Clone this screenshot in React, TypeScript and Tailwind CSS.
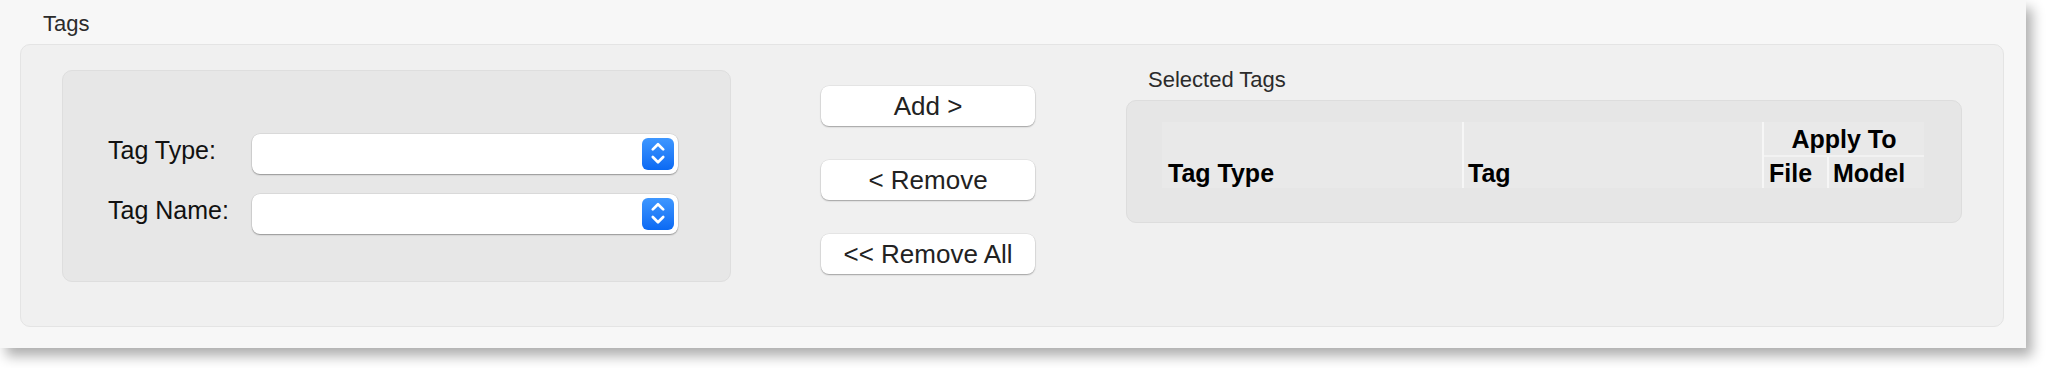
import React from "react";

const font = { fontFamily: '"Liberation Sans", Arial, sans-serif' };

function Stepper() {
  return (
    <div className="w-[32px] h-[32px] rounded-[6px] bg-linear-to-b from-[#3e97ff] to-[#0a69f3] flex items-center justify-center">
      <svg width="32" height="32" viewBox="0 0 32 32" fill="none">
        <path d="M10.8 11.4 L16 6.2 L21.2 11.4" stroke="white" strokeWidth="2.7" strokeLinecap="round" strokeLinejoin="round" />
        <path d="M10.8 19 L16 24.2 L21.2 19" stroke="white" strokeWidth="2.7" strokeLinecap="round" strokeLinejoin="round" />
      </svg>
    </div>
  );
}

function Select() {
  return (
    <div className="w-[426px] h-[40px] bg-white rounded-[8px] shadow-[0_1px_1.5px_rgba(0,0,0,0.32),0_0_0_0.5px_rgba(0,0,0,0.1)] flex items-center justify-end pr-[4px]">
      <Stepper />
    </div>
  );
}

function Btn({ label }: { label: string }) {
  return (
    <div className="w-[214px] h-[40px] bg-white rounded-[8px] shadow-[0_1px_1.5px_rgba(0,0,0,0.3),0_0_0_0.5px_rgba(0,0,0,0.08)] flex items-center justify-center text-[26px] leading-[40px] text-[#222]">
      {label}
    </div>
  );
}

export default function App() {
  return (
    <div className="w-[2046px] h-[368px] bg-white" style={font}>
      <div className="w-[2026px] h-[348px] bg-[#f7f7f7] shadow-[6px_8px_12px_rgba(0,0,0,0.32)] px-[20px] pt-[11px]">
        <div className="pl-[23px] h-[26px] leading-[26px] text-[22px] text-[#2b2b2b] mb-[7px]">Tags</div>
        <div className="w-[1984px] h-[283px] rounded-[10px] border border-[#e4e4e4] bg-[#f0f0f0] flex items-start">
          {/* Left box */}
          <div className="ml-[41px] mt-[25px] w-[669px] h-[212px] rounded-[10px] bg-[#e7e7e7] border border-[#dedede] pt-[63px] pl-[45px] flex flex-col gap-[20px]">
            <div className="flex items-start h-[40px]">
              <div className="w-[144px] h-[32px] leading-[32px] text-[25px] text-[#111]">Tag Type:</div>
              <Select />
            </div>
            <div className="flex items-start h-[40px]">
              <div className="w-[144px] h-[32px] leading-[32px] text-[25px] text-[#111]">Tag Name:</div>
              <Select />
            </div>
          </div>
          {/* Buttons */}
          <div className="ml-[90px] mt-[41px] flex flex-col gap-[34px]">
            <Btn label="Add >" />
            <Btn label="< Remove" />
            <Btn label="<< Remove All" />
          </div>
          {/* Right */}
          <div className="ml-[91px] mt-[22px] flex flex-col">
            <div className="pl-[22px] h-[26px] leading-[26px] text-[22px] text-[#2b2b2b] mb-[7px]">Selected Tags</div>
            <div className="w-[836px] h-[123px] rounded-[10px] bg-[#e6e6e6] border border-[#dddddd] pl-[35px] pt-[21px]">
              <div className="w-[762px] h-[66px] flex font-bold text-[25px] text-black">
                <div className="w-[300px] bg-[#e9e9e9] flex items-end pl-[6px] pb-[1px] leading-[28px]">Tag Type</div>
                <div className="w-[2px] bg-[#f6f6f6]" />
                <div className="w-[298px] bg-[#e9e9e9] flex items-end pl-[4px] pb-[1px] leading-[28px]">Tag</div>
                <div className="w-[2px] bg-[#f6f6f6]" />
                <div className="w-[160px] flex flex-col">
                  <div className="h-[33px] bg-[#e9e9e9] flex items-end justify-center pb-[2px] leading-[28px]">Apply To</div>
                  <div className="h-[2px] bg-[#f2f2f2]" />
                  <div className="flex-1 flex">
                    <div className="w-[63px] bg-[#e9e9e9] flex items-end pl-[5px] pb-[1px] leading-[28px]">File</div>
                    <div className="w-[2px] bg-[#f6f6f6]" />
                    <div className="flex-1 bg-[#e9e9e9] flex items-end pl-[4px] pb-[1px] leading-[28px]">Model</div>
                  </div>
                </div>
              </div>
            </div>
          </div>
        </div>
      </div>
    </div>
  );
}
